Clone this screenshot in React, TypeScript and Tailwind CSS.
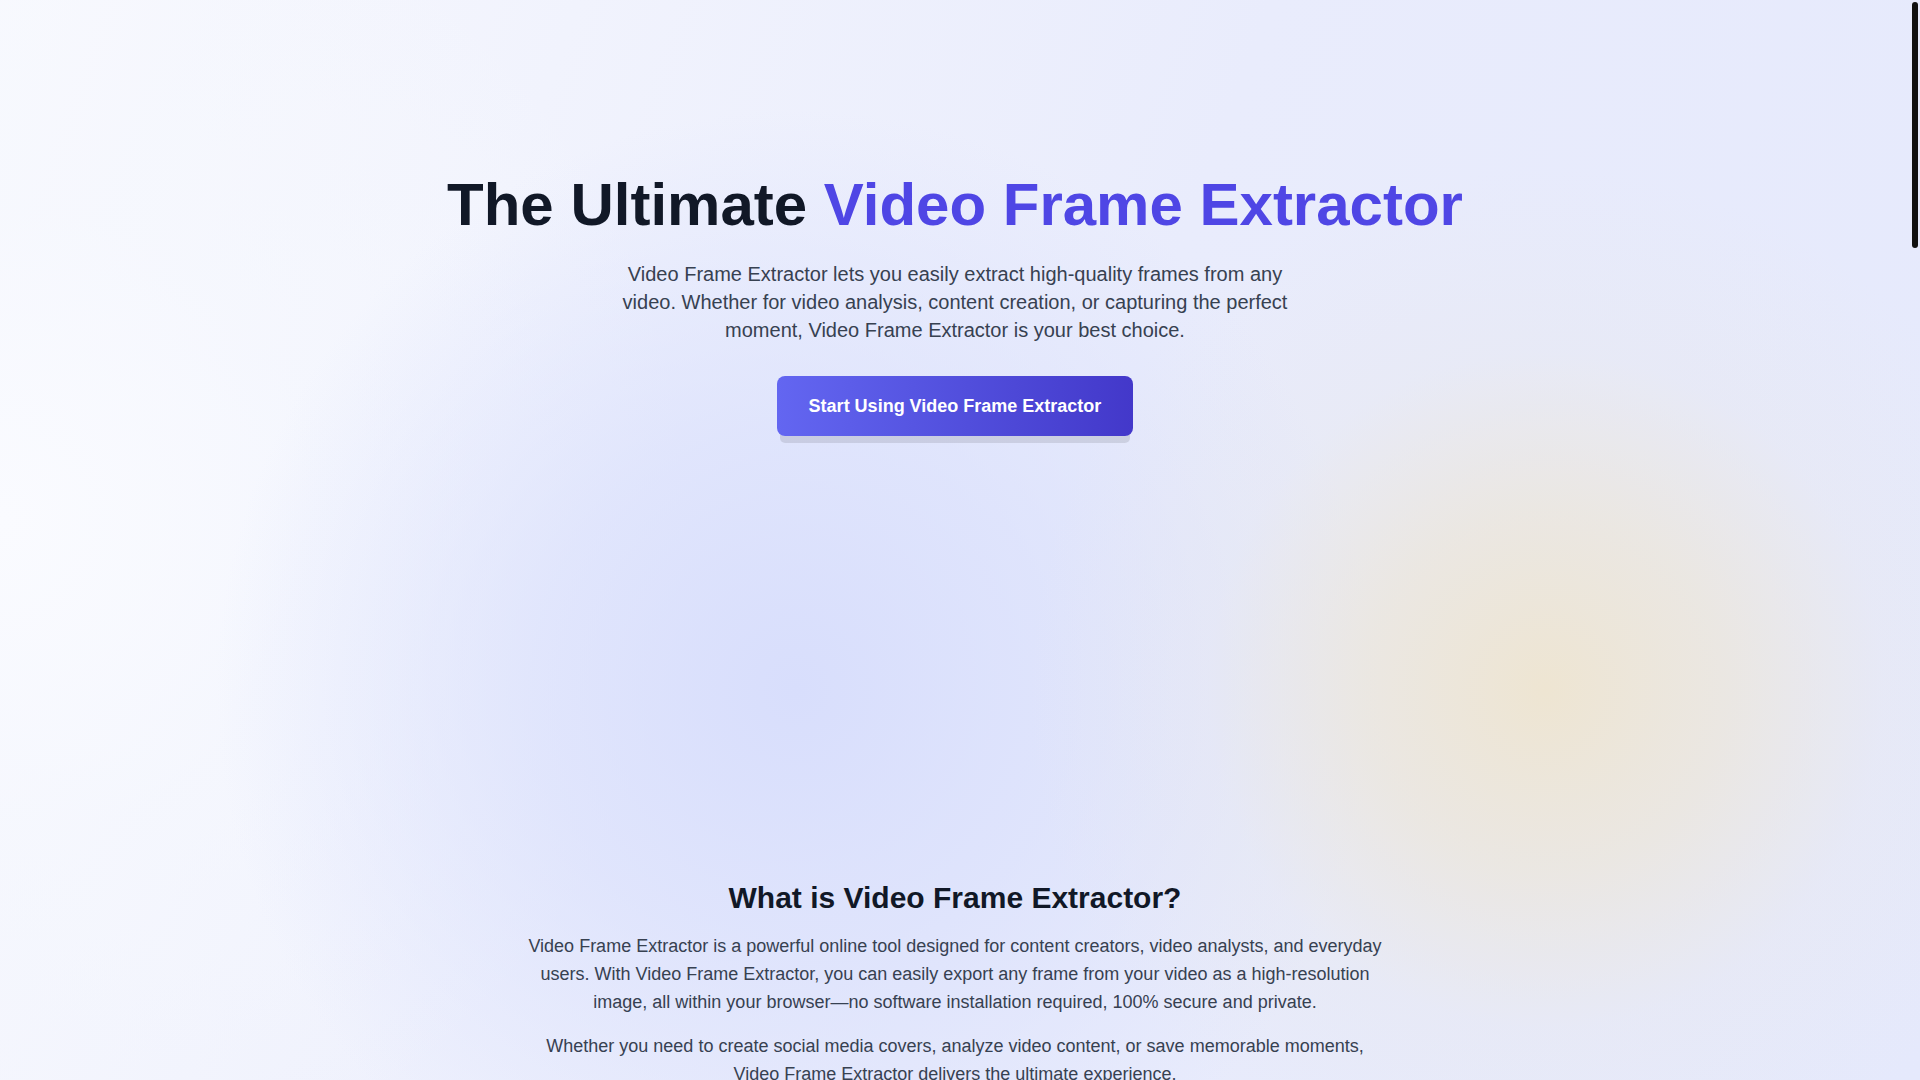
import React from "react";

export default function App() {
  return (
    <div className="flex h-screen overflow-hidden font-['Liberation_Sans',Arial,sans-serif] bg-[#e8ebfc] bg-[image:radial-gradient(circle_520px_at_1545px_690px,rgba(238,229,210,1)_0%,rgba(236,230,218,0.75)_35%,rgba(232,232,236,0.35)_65%,rgba(232,234,245,0)_100%),radial-gradient(circle_580px_at_796px_690px,rgba(216,222,252,1)_0%,rgba(218,224,252,0.7)_45%,rgba(222,227,252,0)_100%),radial-gradient(circle_700px_at_0px_520px,rgba(250,251,255,1)_0%,rgba(246,248,254,0.7)_45%,rgba(246,248,254,0)_100%),linear-gradient(110deg,#f8f9fe_0%,#f1f3fd_25%,#e9ecfc_55%,#e5e9fc_100%)]">
      <main className="min-w-0 flex-1 overflow-y-auto [scrollbar-width:none]">
        <section className="px-4 pt-[175px] pb-[220px] text-center">
          <h1 className="text-6xl font-bold leading-none text-[#111827]">
            The Ultimate <span className="text-[#4f46e5]">Video Frame Extractor</span>
          </h1>
          <p className="mx-auto mt-[25px] max-w-2xl text-xl leading-7 text-[#374151]">
            Video Frame Extractor lets you easily extract high-quality frames from any video. Whether for video analysis, content creation, or capturing the perfect moment, Video Frame Extractor is your best choice.
          </p>
          <button className="mt-[32px] rounded-lg bg-gradient-to-r from-[#6366f1] to-[#4338ca] px-8 py-4 text-lg font-bold leading-7 text-white shadow-[0_10px_0_-3px_rgba(0,0,0,0.1)]">
            Start Using Video Frame Extractor
          </button>
        </section>

        <section className="mx-auto max-w-4xl px-4 pt-[224px] pb-24 text-center">
          <h2 className="mb-4 text-3xl font-bold leading-9 text-[#111827]">What is Video Frame Extractor?</h2>
          <p className="mb-4 text-lg leading-7 text-[#374151]">
            Video Frame Extractor is a powerful online tool designed for content creators, video analysts, and everyday users. With Video Frame Extractor, you can easily export any frame from your video as a high-resolution image, all within your browser—no software installation required, 100% secure and private.
          </p>
          <p className="text-lg leading-7 text-[#374151]">
            Whether you need to create social media covers, analyze video content, or save memorable moments, Video Frame Extractor delivers the ultimate experience.
          </p>
        </section>
      </main>
      <div className="w-[10px] shrink-0 p-[2px]" aria-hidden="true">
        <div className="h-[246px] w-full rounded-full bg-[#111111]" />
      </div>
    </div>
  );
}
